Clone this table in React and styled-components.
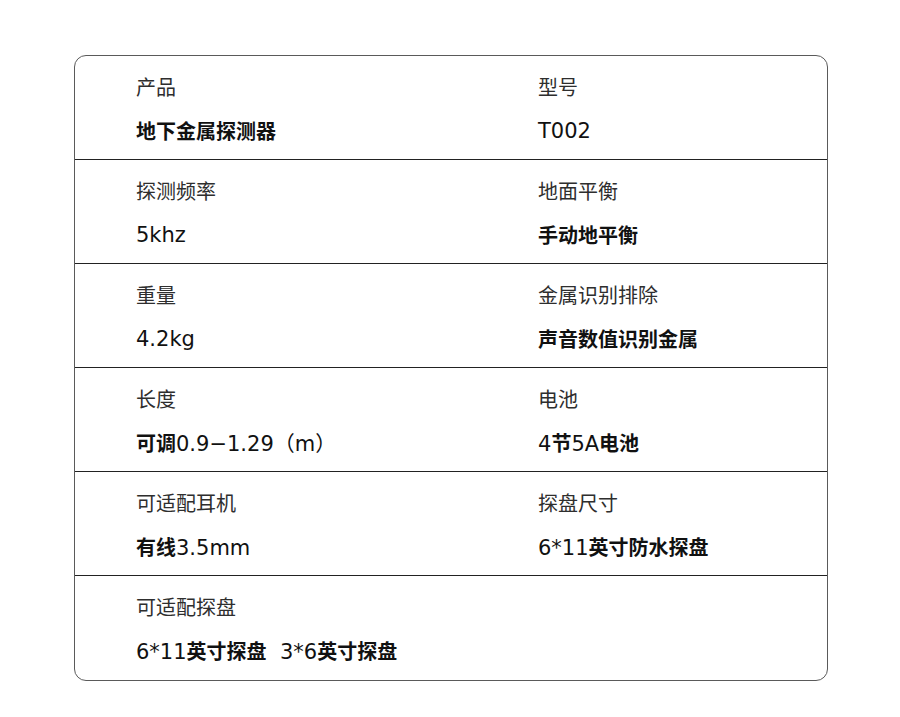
import React from 'react';
import styled, { createGlobalStyle } from 'styled-components';

const GlobalStyle = createGlobalStyle`
  body {
    margin: 0;
    background: #ffffff;
    font-family: "DejaVu Sans", "Noto Sans CJK SC", sans-serif;
  }
`;

const specs = [
  [
    { label: '产品', value: '地下金属探测器' },
    { label: '型号', value: 'T002' },
  ],
  [
    { label: '探测频率', value: '5khz' },
    { label: '地面平衡', value: '手动地平衡' },
  ],
  [
    { label: '重量', value: '4.2kg' },
    { label: '金属识别排除', value: '声音数值识别金属' },
  ],
  [
    { label: '长度', value: '可调0.9−1.29（m）' },
    { label: '电池', value: '4节5A电池' },
  ],
  [
    { label: '可适配耳机', value: '有线3.5mm' },
    { label: '探盘尺寸', value: '6*11英寸防水探盘' },
  ],
  [{ label: '可适配探盘', value: '6*11英寸探盘  3*6英寸探盘' }],
];

const Page = styled.div`
  padding: 55px 0 0 74px;
`;

const Card = styled.div`
  width: 754px;
  box-sizing: border-box;
  border: 1px solid #5a5a5a;
  border-radius: 12px;
  overflow: hidden;
`;

const Row = styled.div`
  display: grid;
  grid-template-columns: 402px 1fr;
  height: 104px;
  box-sizing: border-box;
  padding-left: 61px;
  border-bottom: 1px solid #222;

  &:last-child {
    border-bottom: none;
  }
`;

const Cell = styled.div`
  display: flex;
  flex-direction: column;
  padding-top: 19px;
`;

const Label = styled.div`
  font-family: "Noto Sans CJK SC", sans-serif;
  font-size: 20px;
  line-height: 24px;
  color: #2e2e2e;
`;

const Value = styled.div`
  margin-top: 18px;
  font-size: 21px;
  line-height: 28px;
  color: #111;
  white-space: pre;
`;

const Han = styled.span`
  font-family: "Noto Sans CJK SC", sans-serif;
  font-size: 20px;
  font-weight: 700;
`;

const splitHan = (text) =>
  text.split(/([\u4e00-\u9fff]+)/).map((part, i) =>
    /[\u4e00-\u9fff]/.test(part) ? <Han key={i}>{part}</Han> : part
  );

const App = () => (
  <Page>
    <GlobalStyle />
    <Card>
      {specs.map((row, r) => (
        <Row key={r}>
          {row.map((item) => (
            <Cell key={item.label}>
              <Label>{item.label}</Label>
              <Value>{splitHan(item.value)}</Value>
            </Cell>
          ))}
        </Row>
      ))}
    </Card>
  </Page>
);

export default App;
